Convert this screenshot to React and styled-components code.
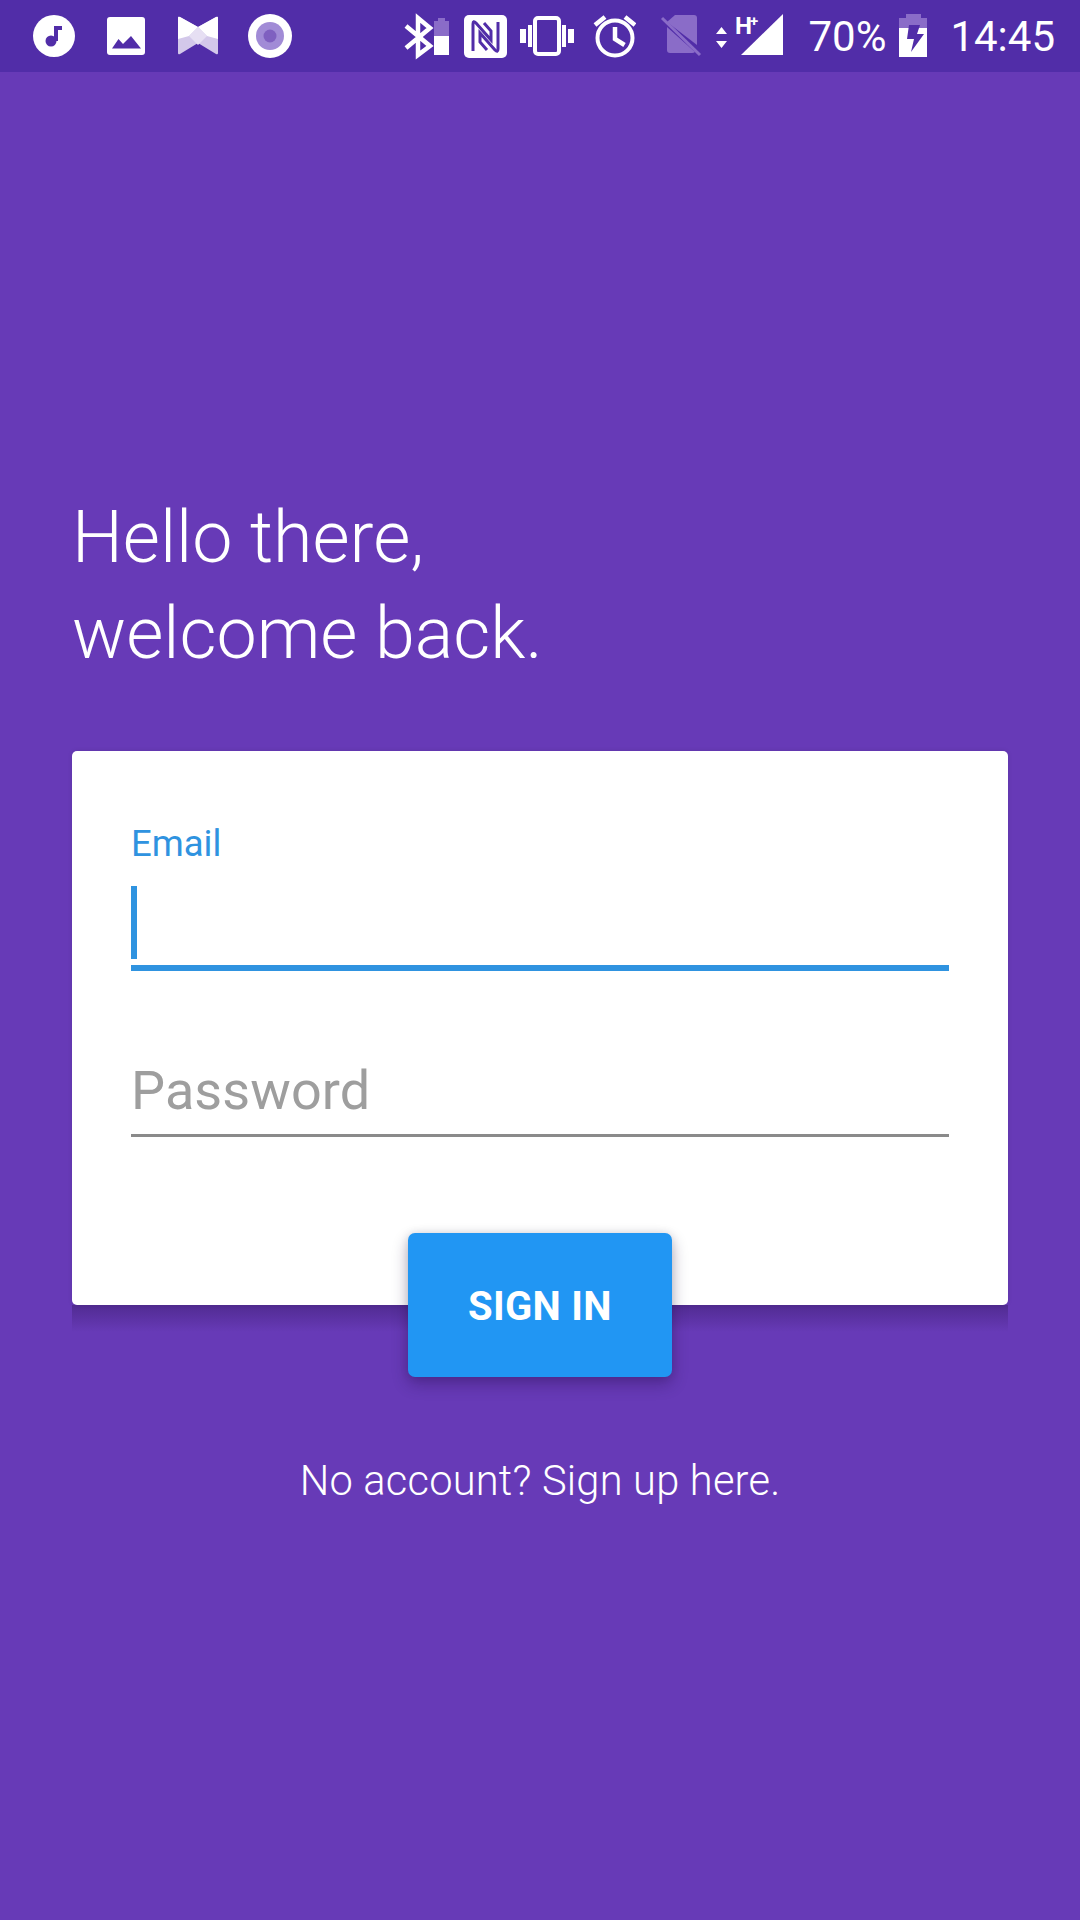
import React from "react";
import styled, { createGlobalStyle } from "styled-components";

const Global = createGlobalStyle`
  html, body { margin: 0; padding: 0; background: #673ab7; }
  * { box-sizing: border-box; }
  body { font-family: Roboto, "Liberation Sans", sans-serif; }
`;
const Page = styled.div`
  width: 1080px; height: 1920px; overflow: hidden;
  display: flex; flex-direction: column; background: #673ab7;
`;
const StatusBar = styled.header`
  height: 72px; flex: none; background: #512da8; color: #fff;
  display: flex; justify-content: space-between; padding: 0 25px 0 18px;
`;
const Group = styled.div`display: flex; align-items: center;`;
const Glyph = styled.svg`
  display: block; flex: none; height: 72px;
  width: ${p => p.$w}px; margin-left: ${p => p.$ml || 0}px;
`;
const StatusText = styled.span`
  font-size: 42px; line-height: 72px; font-weight: 400; white-space: nowrap;
  margin-left: ${p => p.$ml || 0}px; position: relative; top: 1px;
`;
const Main = styled.main`
  flex: 1; display: flex; flex-direction: column; padding: 418px 72px 0;
`;
const Heading = styled.h1`
  margin: 0; font-size: 71.8px; line-height: 96px; font-weight: 300; color: #fff;
`;
const Card = styled.section`
  margin-top: 69px; height: 554px; background: #fff; border-radius: 5px;
  padding: 71px 59px 0; position: relative;
  box-shadow: 0 0 5px rgba(0,0,0,.1);
  &::after {
    content: ""; position: absolute; left: 0; right: 0; top: 100%; height: 27px;
    background: linear-gradient(rgba(30,10,60,.3), rgba(30,10,60,0));
  }
`;
const FieldLabel = styled.div`
  font-size: 36.5px; line-height: 44px; color: #2f93e0;
`;
const EmailInput = styled.div`
  margin-top: 20px; height: 85px; border-bottom: 6px solid #2f93e0; position: relative;
`;
const Caret = styled.span`
  display: block; width: 6px; height: 73px; background: #2f93e0;
`;
const PasswordField = styled.div`
  margin-top: 90px; height: 76px; border-bottom: 3px solid #8a8a8a;
  font-size: 54px; line-height: 60px; color: #9e9e9e; letter-spacing: .1px;
`;
const SignIn = styled.button`
  align-self: center; width: 264px; height: 144px; margin-top: -72px; border: 0;
  border-radius: 7px; background: #2196f3; color: #fff; position: relative; z-index: 2;
  font: 700 40px Roboto, sans-serif; letter-spacing: .3px; padding: 2px 0 0;
  box-shadow: 0 7px 16px rgba(30,10,60,.33), 0 0 8px rgba(0,0,0,.1);
`;
const SignUp = styled.p`
  margin: 74px 0 0; text-align: center; color: #fff;
  font-size: 41.6px; line-height: 60px; font-weight: 300; letter-spacing: .22px;
`;

const BG = "#512da8";
const DIM = "#8a6cc8";

export default function App() {
  return (
    <Page>
      <Global />
      <StatusBar>
        <Group>
          <Glyph $w={72} viewBox="18 0 72 72">
            <circle cx="54" cy="36" r="21" fill="#fff" />
            <circle cx="51" cy="41" r="5.5" fill={BG} />
            <path d="M54 41V26h8v4h-4v11z" fill={BG} />
          </Glyph>
          <Glyph $w={72} viewBox="90 0 72 72">
            <rect x="107" y="17" width="38" height="38" rx="3" fill="#fff" />
            <path d="M112 48.5 118.5 39l4.5 5 8-8 10 12.500z" fill={BG} />
          </Glyph>
          <Glyph $w={72} viewBox="162 0 72 72">
            <path d="M178 18q0-2 2-1l18 10 18-10q2-1 2 1v35q0 2-2 1l-18-11-18 11q-2 1-2-1z" fill="#d3c8ea" />
            <path d="M178 18q0-2 2-1l18 10-9 9-11 3z" fill="#fff" />
            <path d="M218 18q0-2-2-1l-18 10 9 9 11 3z" fill="#fff" />
            <path d="M198 27l9 9-9 9-9-9z" fill="#e6dff3" />
          </Glyph>
          <Glyph $w={72} viewBox="234 0 72 72">
            <circle cx="270" cy="36" r="22" fill="#fff" />
            <circle cx="270" cy="36" r="14" fill="#a18bd6" />
            <circle cx="270" cy="36" r="6.500" fill="#7f60c0" />
          </Glyph>
        </Group>
        <Group>
          <Glyph $w={45} viewBox="405 0 45 72">
            <path d="M407 26 431 46 419 55V18L431 28 407 48" fill="none" stroke="#fff" strokeWidth="4.500" />
            <path d="M439 21v-3h7v3h4v15h-15V21z" fill={DIM} />
            <rect x="435" y="36" width="15" height="19" fill="#fff" />
          </Glyph>
          <Glyph $w={43} $ml={15} viewBox="464 0 43 72">
            <rect x="464" y="15" width="43" height="43" rx="5" fill="#fff" />
            <path d="M473 51V24q0-4 3-1l15 17v-9l-7-8M498 22v27q0 4-3 1L480 33v9l7 8" fill="none" stroke={BG} strokeWidth="3" />
          </Glyph>
          <Glyph $w={54} $ml={13} viewBox="520 0 54 72">
            <rect x="535" y="18" width="24" height="36" rx="3" fill="none" stroke="#fff" strokeWidth="4" />
            <path d="M520 29h6v14h-6zM528 25h4v22h-4zM562 25h4v22h-4zM568 29h6v14h-6z" fill="#fff" />
          </Glyph>
          <Glyph $w={43} $ml={19} viewBox="594 0 43 72">
            <circle cx="616" cy="38" r="17.500" fill="none" stroke="#fff" strokeWidth="4" />
            <path d="M616 27V39l9.500 6M596 25l10-8M636 25l-10-8" fill="none" stroke="#fff" strokeWidth="4.500" />
          </Glyph>
          <Glyph $w={42} $ml={24} viewBox="660 0 42 72">
            <path d="M675 15h19q3 0 3 3v27L667 22z" fill={DIM} />
            <path d="M667 27v23q0 3 3 3h22q2 0 3-1z" fill={DIM} />
            <path d="M662 18 700 55" stroke={DIM} strokeWidth="3" />
          </Glyph>
          <Glyph $w={11} $ml={14} viewBox="717 0 11 72">
            <path d="M717 34h11l-5.500-7zM717 41h11l-5.500 7z" fill="#fff" />
          </Glyph>
          <Glyph $w={48} $ml={9} viewBox="737 0 48 72">
            <path d="M742 55 784 14V55z" fill="#fff" />
            <text x="736" y="34" fill="#fff" fontFamily="Roboto" fontWeight="700" fontSize="24">H</text>
            <text x="751" y="26" fill="#fff" fontFamily="Roboto" fontWeight="700" fontSize="15">+</text>
          </Glyph>
          <StatusText $ml={24}>70%</StatusText>
          <Glyph $w={28} $ml={13} viewBox="900 0 28 72">
            <path d="M907 18v-4h15v4h6v10h-28V18z" fill={DIM} />
            <rect x="900" y="28" width="28" height="29" fill="#fff" />
            <path d="M910 25h11l-3 9h7l-13 18 3-13h-7z" fill={BG} />
          </Glyph>
          <StatusText $ml={23}>14:45</StatusText>
        </Group>
      </StatusBar>
      <Main>
        <Heading>Hello there,<br />welcome back.</Heading>
        <Card>
          <FieldLabel>Email</FieldLabel>
          <EmailInput><Caret /></EmailInput>
          <PasswordField>Password</PasswordField>
        </Card>
        <SignIn>SIGN IN</SignIn>
        <SignUp>No account? Sign up here.</SignUp>
      </Main>
    </Page>
  );
}
